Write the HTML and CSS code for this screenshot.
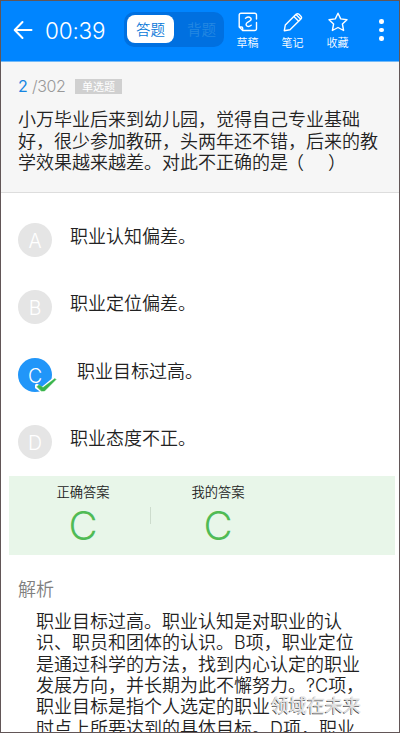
FILE: index.html
```html
<!DOCTYPE html>
<html lang="zh-CN">
<head>
<meta charset="utf-8">
<title>答题</title>
<link rel="stylesheet" href="styles.css">
</head>
<body>
<div class="app">
  <header class="bar">
    <svg class="back" viewBox="0 0 20 20"><path d="M18.500 10H2M9.500 2L1.700 10l7.800 8"/></svg>
    <span class="timer">00:39</span>
    <div class="tabs"><span class="tab on">答题</span><span class="tab">背题</span></div>
    <div class="tools">
      <div class="tool"><svg viewBox="0 0 20 20"><path d="M18.500 7V3a1.800 1.800 0 0 0-1.800-1.800H3A1.800 1.800 0 0 0 1.200 3v12l3.500 3.500h12a1.800 1.800 0 0 0 1.800-1.800V10.500M1.500 15h2q1.200 0 1.200 1.200v2M7.500 6.200Q10.500 4 12.700 6c1.300 1.800-.7 3-2.400 3.900-2.500 1.300-2.800 3.200-1.200 4.200q1.800 1 4.100-.9"/></svg><span>草稿</span></div>
      <div class="tool"><svg viewBox="0 0 20 20"><path d="M1.300 18.700l1-5.700L13 2.300q1.500-1.300 3 0l1.900 1.900q1.300 1.400 0 2.900L7 17.800zM10.900 4.500l4.800 4.800M13 2.600l4.500 4.500"/></svg><span>笔记</span></div>
      <div class="tool"><svg viewBox="0 0 20 20"><path d="M10 1.200l2.700 5.700 6.300.8-4.600 4.300 1.200 6.500L10 15.500l-5.600 3L5.600 12 1 7.700l6.300-.8z"/></svg><span>收藏</span></div>
    </div>
    <div class="more"><i></i><i></i><i></i></div>
  </header>
  <section class="question">
    <div class="meta"><b>2</b><span class="total">/302</span><span class="kind">单选题</span></div>
    <p class="stem">小万毕业后来到幼儿园，觉得自己专业基础<br>好，很少参加教研，头两年还不错，后来的教<br>学效果越来越差。对此不正确的是<span class="paren">（</span><span class="blank"></span>）</p>
  </section>
  <main class="options">
    <div class="option"><span class="letter">A</span><span>职业认知偏差。</span></div>
    <div class="option"><span class="letter">B</span><span>职业定位偏差。</span></div>
    <div class="option chosen"><span class="letter">C<svg class="tick" viewBox="0 0 22 16"><path class="halo" d="M2 9.500l5 3.500L18 4"/><path d="M2 9.500l2-1.500 4 2.500L20 1.500l1 1L9.500 14h-3z"/></svg></span><span>职业目标过高。</span></div>
    <div class="option"><span class="letter">D</span><span>职业态度不正。</span></div>
  </main>
  <section class="result">
    <div class="answer"><span>正确答案</span><strong>C</strong></div>
    <i class="rule"></i>
    <div class="answer"><span>我的答案</span><strong>C</strong></div>
  </section>
  <section class="analysis">
    <h2>解析</h2>
    <p><span class="line">职业目标过高。职业认知是对职业的认</span><span class="line">识、职员和团体的认识。<span class="latin">B</span>项，职业定位</span><span class="line">是通过科学的方法，找到内心认定的职业</span><span class="line">发展方向，并长期为此不懈努力。<span class="latin">?C</span>项，</span><span class="line">职业目标是指个人选定的职业<span class="veiled">领域在未来<span class="mark">领域在未来</span></span></span><span class="line">时点上所要达到的具体目标。<span class="latin">D</span>项，职业</span></p>
  </section>
</div>
</body>
</html>
```
FILE: styles.css
```css
* { box-sizing: border-box; }
body { margin: 0; font-family: "Noto Sans CJK SC", sans-serif; font-weight: 350; color: #222; }
.app { width: 400px; height: 733px; overflow: hidden; border: 1px solid #625657; background: #fff; }
svg { fill: none; stroke: #fff; stroke-width: 1.400; stroke-linejoin: round; stroke-linecap: round; }
.bar { height: 61px; background: #0085ff; border-bottom: 1px solid #72b9f7; display: flex; color: #fff; padding-left: 12px; }
.back { width: 20px; height: 20px; margin-top: 19px; stroke-width: 2; }
.timer { font: 300 22.500px/30px Inter, sans-serif; margin: 15px 0 0 12px; width: 61px; white-space: nowrap; letter-spacing: -0.200px; }
.tabs { display: flex; width: 100px; height: 35px; margin: 11px 0 0 18px; padding: 3px; border-radius: 10px; background: #0070e0; }
.tab { width: 47px; flex: none; height: 28px; border-radius: 8px; text-align: center; font-size: 14.500px; line-height: 28px; color: #2588e2; margin-left: 4px; }
.tab.on { background: #fff; color: #0878d8; margin-left: 0; }
.tools { display: flex; margin: 11px 0 0 1px; }
.tool { width: 45px; display: flex; flex-direction: column; align-items: center; font-size: 11px; line-height: 16px; }
.tool svg { width: 20px; height: 20px; margin-bottom: 2px; }
.more { display: flex; flex-direction: column; gap: 4px; margin: 18px 0 0 19px; }
.more i { width: 4.500px; height: 4.500px; border-radius: 50%; background: #fff; }
.question { height: 131px; background: #f6f6f6; border-bottom: 1px solid #ddd; padding: 14px 0 0 17px; }
.meta { display: flex; height: 20px; align-items: center; font: 16px/20px Inter, sans-serif; color: #999; }
.meta b { color: #1686e2; font-weight: 400; width: 14px; }
.total { width: 43px; font-weight: 300; letter-spacing: -0.400px; }
.kind { width: 47px; height: 15px; background: #d0d0d0; color: #fff; font: 11px/15px "Noto Sans CJK SC", sans-serif; text-align: center; }
.stem { margin: 12px 0 0; font-size: 18px; line-height: 21.500px; white-space: nowrap; }
.paren { margin-left: -2px; }
.blank { display: inline-block; width: 24px; }
.options { padding: 30px 0 0 17px; }
.option { display: flex; height: 67.300px; font-size: 18px; line-height: 25px; }
.letter { position: relative; width: 34px; height: 34px; margin-right: 18px; border-radius: 50%; background: #e5e5e5; color: #fff; text-align: center; font: 300 19.500px/36px Inter, sans-serif; }
.chosen .letter { background: #2196f9; margin-right: 25px; }
.tick { position: absolute; left: 17px; top: 19px; width: 22px; height: 16px; }
.tick path { fill: #38b44a; stroke: #38b44a; stroke-width: .5; }
.tick .halo { fill: none; stroke: #fff; stroke-width: 5; }
.result { height: 79px; width: 386px; margin: -16px 0 0 8px; background: #e8f6e9; display: flex; padding: 7px 0 0 7px; }
.answer { width: 134px; display: flex; flex-direction: column; align-items: center; font-size: 13.300px; line-height: 18px; }
.answer strong { color: #50bb55; font: 300 40px/46px Inter, sans-serif; margin-top: 2px; }
.rule { width: 1px; height: 17px; background: #cddccd; margin-top: 24px; }
.analysis { padding: 21px 0 0 17px; }
.analysis h2 { margin: 0; font-size: 18px; line-height: 24px; font-weight: 350; color: #808080; }
.analysis p { margin: 10px 0 0 18px; font-size: 18px; line-height: 21.300px; white-space: nowrap; }
.line { display: block; height: 21.300px; }
.latin { font-family: Inter, sans-serif; font-weight: 300; font-size: 18px; line-height: 1; }
.veiled { position: relative; color: #444; }
.mark { position: absolute; left: 1px; top: -1px; line-height: 26px; color: #e0e0e0; -webkit-text-stroke: .4px #e8e8e8; }
```
